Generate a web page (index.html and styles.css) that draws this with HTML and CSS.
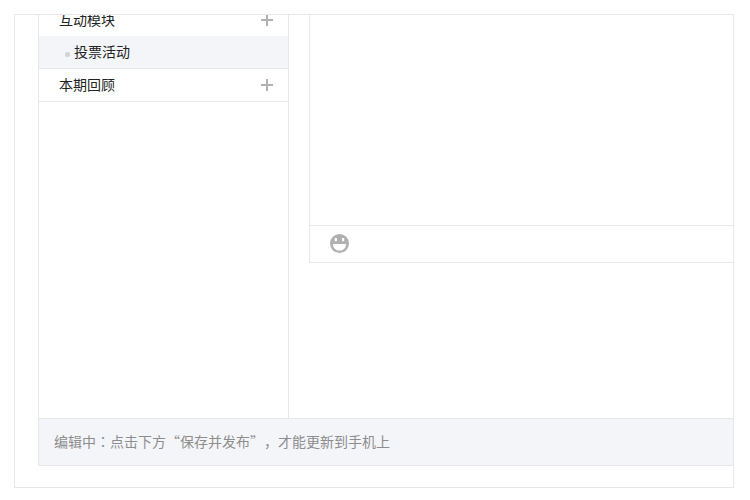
FILE: index.html
```
<!DOCTYPE html>
<html lang="zh-CN">
  <head>
    <meta charset="UTF-8" />
    <meta name="viewport" content="width=device-width, initial-scale=1.0" />
    <title>编辑</title>
    <link rel="stylesheet" href="styles.css">
  </head>
  <body>
    <div class="frame">
      <div class="workspace">
        <nav class="sidebar">
          <div class="menu-row menu-row-open">
            <span class="menu-label">互动模块</span>
            <button type="button" class="add-btn" aria-label="添加互动模块">
              <svg width="12" height="12" viewBox="0 0 12 12">
                <path d="M5 0h2v5h5v2H7v5H5V7H0V5h5z" />
              </svg>
            </button>
          </div>
          <a href="#" class="menu-sub"><span class="menu-label">投票活动</span></a>
          <div class="menu-row">
            <span class="menu-label">本期回顾</span>
            <button type="button" class="add-btn" aria-label="添加本期回顾">
              <svg width="12" height="12" viewBox="0 0 12 12">
                <path d="M5 0h2v5h5v2H7v5H5V7H0V5h5z" />
              </svg>
            </button>
          </div>
        </nav>

        <div class="content">
          <div class="editor">
            <textarea class="editor-text" aria-label="正文"></textarea>
            <div class="toolbar">
              <button type="button" class="emoji-btn" aria-label="表情">
                <svg width="19" height="19" viewBox="0 0 19 19">
                  <circle class="face" cx="9.5" cy="9.5" r="9.5" />
                  <rect class="hole" x="4.8" y="4" width="2.2" height="3.2" rx="0.6" />
                  <rect class="hole" x="12" y="4" width="2.2" height="3.2" rx="0.6" />
                  <path class="hole" d="M3 10h13c0 4.2-2.6 6.6-6.5 6.6S3 14.2 3 10z" />
                </svg>
              </button>
            </div>
          </div>
        </div>
      </div>

      <div class="status-bar">编辑中<span class="colon" lang="zh-TW">：</span>点击下方“保存并发布”，才能更新到手机上</div>
    </div>
  </body>
</html>
```

FILE: styles.css
```
* {
  box-sizing: border-box;
}

body {
  display: flex;
  height: 100vh;
  margin: 0;
  padding: 14px 16px 12px 14px;
  background: #fff;
  color: #222;
  font-family: "Noto Sans CJK SC", sans-serif;
  font-size: 14px;
  line-height: 20px;
  text-spacing-trim: space-all;
}

button {
  display: block;
  padding: 0;
  border: none;
  background: none;
  cursor: pointer;
}

svg {
  display: block;
}

.frame {
  display: flex;
  flex: 1;
  flex-direction: column;
  min-width: 0;
  padding: 0 0 21px 23px;
  border: 1px solid #e7e7eb;
  overflow: hidden;
}

.workspace {
  display: flex;
  flex: 1;
  min-height: 0;
  overflow: hidden;
}

/* Module list */
.sidebar {
  flex: none;
  width: 251px;
  border: 1px solid #e7e7eb;
  border-width: 0 1px;
}

.menu-row {
  display: flex;
  align-items: center;
  justify-content: space-between;
  height: 33px;
  padding: 0 15px 0 20px;
  border-bottom: 1px solid #e7e7eb;
}

/* scrolled partly out of view */
.menu-row-open {
  margin-top: -12px;
  border-bottom: none;
}

.menu-label {
  padding-bottom: 2px;
}

.add-btn {
  fill: #b0b0b0;
}

.menu-sub {
  display: flex;
  align-items: center;
  height: 33px;
  padding-left: 26px;
  border-bottom: 1px solid #e7e7eb;
  background: #f4f5f9;
  color: #222;
  text-decoration: none;
}

.menu-sub::before {
  content: "";
  width: 5px;
  height: 5px;
  margin: 4px 4px 0 0;
  border-radius: 50%;
  background: #d3d3d3;
}

/* Editor */
.content {
  flex: 1;
  min-width: 0;
  padding-left: 20px;
}

.editor {
  border: 1px solid #e7e7eb;
  border-width: 0 0 1px 1px;
}

.editor-text {
  display: block;
  width: 100%;
  height: 210px;
  padding: 10px 20px;
  border: none;
  outline: none;
  background: none;
  font: inherit;
  resize: none;
}

.toolbar {
  display: flex;
  align-items: flex-start;
  height: 37px;
  padding: 8px 20px;
  border-top: 1px solid #e7e7eb;
}

.face {
  fill: #b0b0b0;
}

.hole {
  fill: #fff;
}

.status-bar {
  padding: 12px 15px 14px;
  border: 1px solid #e7e7eb;
  border-right: none;
  background: #f4f5f9;
  color: #8d8d8d;
}

/* the TC face centres the colon in its square */
.colon {
  font-family: "Noto Sans CJK TC", sans-serif;
}
```
